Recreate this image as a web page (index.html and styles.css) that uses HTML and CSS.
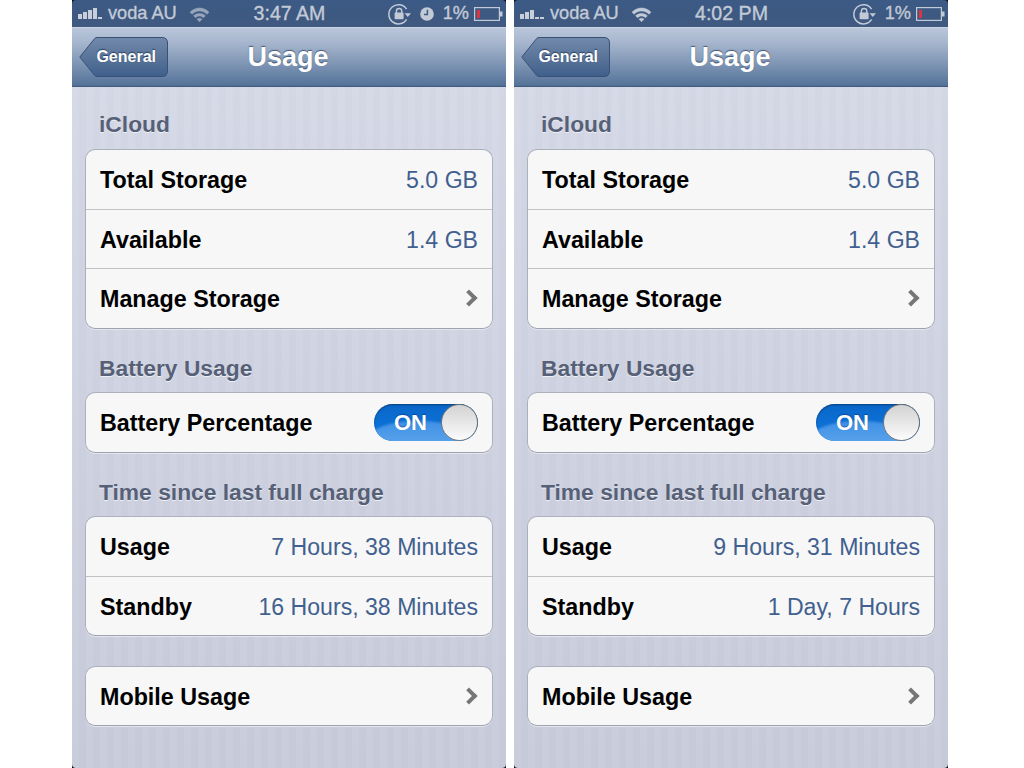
FILE: index.html
```html
<!DOCTYPE html>
<html lang="en">
<head>
<meta charset="utf-8">
<title>Usage</title>
<link rel="stylesheet" href="styles.css">
</head>
<body>
<svg class="defs" width="0" height="0" aria-hidden="true">
  <defs>
    <linearGradient id="backfill" x1="0" y1="0" x2="0" y2="1">
      <stop offset="0" stop-color="#7189ab"/>
      <stop offset="0.5" stop-color="#5a7599"/>
      <stop offset="1" stop-color="#3f5f8c"/>
    </linearGradient>
    <symbol id="wifi" viewBox="0 0 21 16">
      <path d="M1 6.200C6.600 .6 14.400 .6 20 6.200L18 8.200C13.400 3.800 7.600 3.800 3 8.200Z"/>
      <path d="M4.600 9.800C8 6.600 13 6.600 16.400 9.800L14.500 11.700C12 9.500 9 9.500 6.500 11.700Z"/>
      <path d="M8 13.200C9.500 12 11.500 12 13 13.200L10.500 15.800Z"/>
    </symbol>
    <symbol id="lock" viewBox="0 0 23 22">
      <path d="M18.600 6.200A9.600 9.600 0 1 0 18.600 16.400" fill="none" stroke="currentColor" stroke-width="1.500"/>
      <path d="M16.600 10.200H23L19.800 14Z" fill="currentColor"/>
      <rect x="6.600" y="9.600" width="9" height="6.600" rx=".8" fill="currentColor"/>
      <path d="M8.400 10V8.200a2.700 2.700 0 0 1 5.400 0V10" fill="none" stroke="currentColor" stroke-width="1.400"/>
    </symbol>
    <symbol id="clock" viewBox="0 0 14 14">
      <circle cx="7" cy="7" r="6.800" fill="currentColor"/>
      <path d="M7.400 2.800V7.600H4" fill="none" stroke="#3f5b82" stroke-width="1.500"/>
    </symbol>
    <symbol id="battery" viewBox="0 0 29 14">
      <rect x=".6" y=".6" width="24.800" height="12.800" fill="none" stroke="currentColor" stroke-width="1.200"/>
      <rect x="3" y="3" width="3" height="8" fill="#e0343c"/>
      <path d="M26 4.500h2.500v5h-2.500z" fill="currentColor"/>
    </symbol>
    <symbol id="backbtn" viewBox="0 0 89 40">
      <path d="M.8 20 15.600 1.600Q16.400.5 18 .5H83Q88.500 .5 88.500 6V34Q88.500 39.500 83 39.500H18Q16.400 39.500 15.600 38.400Z"/>
    </symbol>
  </defs>
</svg>

<main class="phone">
  <header class="status">
    <div class="status-left">
      <span class="signal"><i class="bar b1"></i><i class="bar b2"></i><i class="bar b3"></i><i class="bar b4"></i><i class="bar b5 dot"></i></span>
      <span class="carrier">voda AU</span>
      <svg class="wifi dim"><use href="#wifi"/></svg>
    </div>
    <div class="time">3:47 AM</div>
    <div class="status-right">
      <svg class="lock"><use href="#lock"/></svg>
      <svg class="clock"><use href="#clock"/></svg>
      <span class="pct">1%</span>
      <svg class="battery"><use href="#battery"/></svg>
    </div>
  </header>
  <nav class="navbar">
    <a class="back"><svg class="back-shape"><use href="#backbtn"/></svg><span class="back-label">General</span></a>
    <h1 class="title">Usage</h1>
  </nav>
  <div class="content">
    <h2 class="section first">iCloud</h2>
    <ul class="group">
      <li class="row"><span class="label">Total Storage</span><span class="value">5.0 GB</span></li>
      <li class="row"><span class="label">Available</span><span class="value">1.4 GB</span></li>
      <li class="row"><span class="label">Manage Storage</span><span class="chev"></span></li>
    </ul>
    <h2 class="section">Battery Usage</h2>
    <ul class="group">
      <li class="row"><span class="label">Battery Percentage</span><span class="switch"><span class="gloss"></span><span class="switch-text">ON</span><span class="knob"></span></span></li>
    </ul>
    <h2 class="section">Time since last full charge</h2>
    <ul class="group">
      <li class="row"><span class="label">Usage</span><span class="value">7 Hours, 38 Minutes</span></li>
      <li class="row"><span class="label">Standby</span><span class="value">16 Hours, 38 Minutes</span></li>
    </ul>
    <ul class="group solo">
      <li class="row"><span class="label">Mobile Usage</span><span class="chev"></span></li>
    </ul>
  </div>
</main>

<main class="phone">
  <header class="status">
    <div class="status-left">
      <span class="signal"><i class="bar b1"></i><i class="bar b2"></i><i class="bar b3"></i><i class="bar b4 dot"></i><i class="bar b5 dot"></i></span>
      <span class="carrier">voda AU</span>
      <svg class="wifi"><use href="#wifi"/></svg>
    </div>
    <div class="time">4:02 PM</div>
    <div class="status-right">
      <svg class="lock"><use href="#lock"/></svg>
      <span class="pct">1%</span>
      <svg class="battery"><use href="#battery"/></svg>
    </div>
  </header>
  <nav class="navbar">
    <a class="back"><svg class="back-shape"><use href="#backbtn"/></svg><span class="back-label">General</span></a>
    <h1 class="title">Usage</h1>
  </nav>
  <div class="content">
    <h2 class="section first">iCloud</h2>
    <ul class="group">
      <li class="row"><span class="label">Total Storage</span><span class="value">5.0 GB</span></li>
      <li class="row"><span class="label">Available</span><span class="value">1.4 GB</span></li>
      <li class="row"><span class="label">Manage Storage</span><span class="chev"></span></li>
    </ul>
    <h2 class="section">Battery Usage</h2>
    <ul class="group">
      <li class="row"><span class="label">Battery Percentage</span><span class="switch"><span class="gloss"></span><span class="switch-text">ON</span><span class="knob"></span></span></li>
    </ul>
    <h2 class="section">Time since last full charge</h2>
    <ul class="group">
      <li class="row"><span class="label">Usage</span><span class="value">9 Hours, 31 Minutes</span></li>
      <li class="row"><span class="label">Standby</span><span class="value">1 Day, 7 Hours</span></li>
    </ul>
    <ul class="group solo">
      <li class="row"><span class="label">Mobile Usage</span><span class="chev"></span></li>
    </ul>
  </div>
</main>
</body>
</html>
```
FILE: styles.css
```css
* { box-sizing: border-box; }
html, body { margin: 0; height: 768px; overflow: hidden; background: #fff; }
body {
  display: flex;
  justify-content: center;
  gap: 8px;
  padding-right: 4px;
  font-family: "Liberation Sans", Arial, sans-serif;
}
.defs { position: absolute; }
.phone {
  position: relative;
  width: 434px;
  height: 768px;
  flex: none;
  display: flex;
  flex-direction: column;
  overflow: hidden;
  background-image:
    repeating-linear-gradient(90deg, rgba(255, 255, 255, .03) 0, rgba(255, 255, 255, .03) 7px, rgba(100, 105, 140, .02) 7px, rgba(100, 105, 140, .02) 14px),
    linear-gradient(#d7dae7, #c8cbda);
}
.phone::after {
  content: "";
  position: absolute;
  inset: 0;
  border-radius: 4px;
  box-shadow: 0 0 0 5px #0c0c0e;
  pointer-events: none;
}

/* status bar */
.status {
  height: 27px;
  flex: none;
  display: grid;
  grid-template-columns: 1fr auto 1fr;
  align-items: center;
  padding: 0 3px 0 6px;
  color: #c3cad7;
  font-size: 18.200px;
  -webkit-text-stroke: .35px #c3cad7;
  background: linear-gradient(#3b5a85, #40597f);
}
.status-left, .status-right { display: flex; align-items: center; }
.status-right { justify-content: flex-end; }
.signal { display: flex; align-items: flex-end; gap: 1px; height: 11px; width: 25px; }
.bar { display: block; width: 4px; background: #c8cfdb; }
.b1 { height: 5px; }
.b2 { height: 7px; }
.b3 { height: 9px; }
.b4 { height: 11px; }
.b5 { height: 11px; }
.bar.dot { height: 2px; }
.carrier { margin-left: 5px; }
.wifi { width: 21px; height: 16px; margin-left: 12px; fill: #c3cad7; stroke: #c3cad7; stroke-width: .5; }
.wifi.dim { fill: #98a6bb; stroke: #98a6bb; }
.time { font-size: 19.600px; margin-right: 2px; }
.lock { width: 23px; height: 22px; color: #c3cad7; }
.clock { width: 14px; height: 14px; margin-left: 9px; color: #c3cad7; }
.pct { margin-left: 9px; }
.battery { width: 29px; height: 14px; margin-left: 5px; color: #c3cad7; }

/* nav bar */
.navbar {
  height: 60px;
  flex: none;
  position: relative;
  display: flex;
  align-items: center;
  justify-content: center;
  background: linear-gradient(#b9c6da 0, #a9b8cf 22%, #7d94b3 62%, #557399 97%, #3a5176 100%);
  border-top: 1px solid #c9d3e3;
}
.title {
  margin: 0 0 0 -2px;
  color: #fff;
  font-size: 27px;
  font-weight: 700;
  text-shadow: 0 -1px 1px rgba(40, 60, 90, .75);
}
.back {
  position: absolute;
  left: 7px;
  top: 9px;
  width: 89px;
  height: 40px;
  display: flex;
  align-items: center;
  justify-content: flex-end;
  padding-right: 12px;
}
.back-shape {
  position: absolute;
  inset: 0;
  width: 89px;
  height: 40px;
  fill: url(#backfill);
  stroke: #3a5175;
  stroke-width: 1;
}
.back-label {
  position: relative;
  color: #fff;
  font-size: 16px;
  font-weight: 700;
  text-shadow: 0 -1px 1px rgba(30, 50, 80, .8);
}

/* content */
.content { flex: 1; padding: 0 13px; }
.section {
  margin: 0;
  height: 63.500px;
  padding: 26px 0 0 14px;
  font-size: 22.800px;
  line-height: 26px;
  font-weight: 700;
  color: #566077;
  text-shadow: 0 1px 0 #eef0f5;
}
.section.first { height: 62px; padding-top: 24px; }
.group {
  list-style: none;
  margin: 0;
  padding: 0;
  background: #f7f7f7;
  border: 1px solid #acb0bd;
  border-bottom-color: #9ea3b2;
  border-radius: 10px;
  box-shadow: 0 1px 0 #e4e6ee;
}
.group.solo { margin-top: 29.500px; }
.row {
  height: 59.500px;
  display: flex;
  align-items: center;
  justify-content: space-between;
  padding: 0 14px 0 14px;
  border-top: 1px solid #c2c2c6;
}
.row:first-child { border-top: 0; height: 58.500px; }
.label { padding-top: 2.500px; font-size: 23.300px; font-weight: 700; color: #000; }
.value { padding-top: 2.500px; font-size: 23.100px; color: #41608f; }
.chev {
  width: 12px;
  height: 12px;
  margin-right: 3.500px;
  border-top: 4px solid #767676;
  border-right: 4px solid #767676;
  transform: rotate(45deg);
}

/* switch */
.switch {
  position: relative;
  width: 104px;
  height: 37px;
  margin-top: 1px;
  display: flex;
  align-items: center;
  border-radius: 19px;
  overflow: hidden;
  background: linear-gradient(#0a66c8 0, #0e78e0 100%);
  box-shadow: inset 0 1px 2px rgba(0, 0, 0, .4);
}
.gloss {
  position: absolute;
  left: -6px;
  right: 10px;
  bottom: -16px;
  height: 36px;
  border-radius: 50%;
  background: linear-gradient(#3f90e6, #6aaeee);
  filter: blur(1px);
}
.switch-text {
  position: relative;
  margin-left: 20px;
  color: #fff;
  font-size: 22px;
  font-weight: 700;
  text-shadow: 0 -1px 1px rgba(0, 40, 110, .5);
}
.knob {
  position: absolute;
  right: 0;
  top: 0;
  width: 37px;
  height: 37px;
  border-radius: 50%;
  border: 1px solid #777;
  background: linear-gradient(#d2d2d2, #fcfcfc);
}
```
